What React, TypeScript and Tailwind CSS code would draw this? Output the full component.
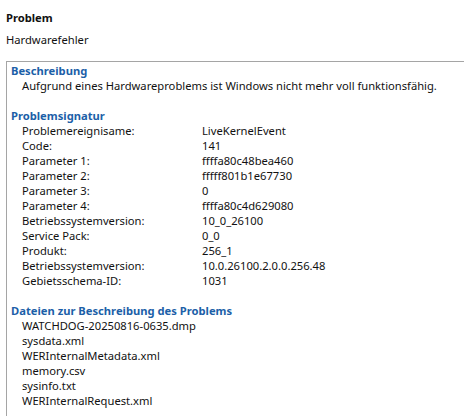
const signature: [string, string][] = [
  ["Problemereignisame:", "LiveKernelEvent"],
  ["Code:", "141"],
  ["Parameter 1:", "ffffa80c48bea460"],
  ["Parameter 2:", "fffff801b1e67730"],
  ["Parameter 3:", "0"],
  ["Parameter 4:", "ffffa80c4d629080"],
  ["Betriebssystemversion:", "10_0_26100"],
  ["Service Pack:", "0_0"],
  ["Produkt:", "256_1"],
  ["Betriebssystemversion:", "10.0.26100.2.0.0.256.48"],
  ["Gebietsschema-ID:", "1031"],
];

const files = [
  "WATCHDOG-20250816-0635.dmp",
  "sysdata.xml",
  "WERInternalMetadata.xml",
  "memory.csv",
  "sysinfo.txt",
  "WERInternalRequest.xml",
];

function Heading({ children }: { children: React.ReactNode }) {
  return <div className="h-[15px] pl-[4px] font-bold text-[#1c5fa8]">{children}</div>;
}

export default function App() {
  return (
    <div className="h-[416px] w-[464px] overflow-hidden bg-white pt-[10px] pl-[6px] text-[11.2px] leading-[15px] text-[#111] [font-family:'Noto_Sans',sans-serif]">
      <div className="h-[15px] font-bold">Problem</div>
      <div className="mt-[7px] h-[15px]">Hardwarefehler</div>

      <div className="mt-[14px] h-[400px] w-[600px] border border-[#a5a5a5] pt-[1px]">
        <Heading>Beschreibung</Heading>
        <div className="h-[15px] pl-[15px]">
          Aufgrund eines Hardwareproblems ist Windows nicht mehr voll funktionsfähig.
        </div>

        <div className="mt-[15px]">
          <Heading>Problemsignatur</Heading>
          {signature.map(([label, value], i) => (
            <div key={i} className="flex h-[15px] pl-[15px]">
              <span className="w-[180px] shrink-0">{label}</span>
              <span>{value}</span>
            </div>
          ))}
        </div>

        <div className="mt-[15px]">
          <Heading>Dateien zur Beschreibung des Problems</Heading>
          {files.map((f) => (
            <div key={f} className="h-[15px] pl-[15px]">
              {f}
            </div>
          ))}
        </div>
      </div>
    </div>
  );
}
